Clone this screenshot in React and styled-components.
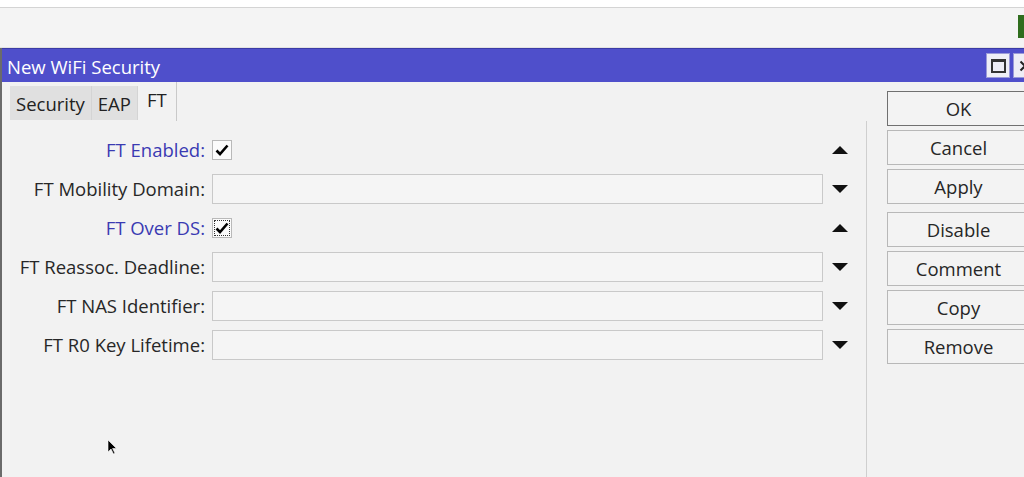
import styled, { createGlobalStyle } from 'styled-components';

const GlobalStyle = createGlobalStyle`
    html, body {
        margin: 0;
        padding: 0;
        background: #f3f3f3;
        overflow: hidden;
    }
    body {
        font-family: "Open Sans", "Noto Sans", sans-serif;
        font-size: 18.5px;
        color: #262626;
    }
`;

const Page = styled.div`
    width: 1024px;
    height: 477px;
    display: flex;
    flex-direction: column;
    position: relative;
    overflow: hidden;
`;

const TopStrip = styled.div`
    height: 40px;
    flex-shrink: 0;
    border-top: 7px solid #ffffff;
    border-bottom: 1px solid #e2e2e2;
    background: #f4f4f4;
    display: flex;
    justify-content: flex-end;
    align-items: flex-start;
    box-shadow: inset 0 1px 0 #d4d4d4;
`;

const StatusLed = styled.div`
    width: 6px;
    height: 23px;
    margin-top: 8px;
    background: #2f6d1d;
`;

const Dialog = styled.section`
    flex: 1;
    display: flex;
    flex-direction: column;
    border-left: 2px solid #6b6b6b;
    background: #f2f2f2;
    margin-right: -16px;
`;

const TitleBar = styled.header`
    height: 34px;
    flex-shrink: 0;
    background: #4f4fcb;
    border-top: 1px solid #3b3ba6;
    display: flex;
    align-items: center;
    padding-left: 5px;
    box-sizing: border-box;
    color: #ffffff;
    font-size: 18.5px;
`;

const Title = styled.span`
    flex: 1;
    padding-top: 1px;
`;

const WinButton = styled.div`
    width: 24px;
    height: 25px;
    box-sizing: border-box;
    background: #eeeef6;
    border: 1px solid #9a9ad8;
    display: flex;
    align-items: center;
    justify-content: center;
    margin-right: 3px;
    flex-shrink: 0;
`;

const MaxIcon = styled.div`
    width: 15px;
    height: 14px;
    box-sizing: border-box;
    border: 2px solid #333;
    border-top-width: 3px;
`;

const Body = styled.div`
    flex: 1;
    display: flex;
`;

const MainPane = styled.div`
    width: 865px;
    flex-shrink: 0;
    display: flex;
    flex-direction: column;
`;

const Tabs = styled.div`
    display: flex;
    padding-left: 8px;
    height: 39px;
    box-sizing: border-box;
`;

const Tab = styled.div`
    margin-top: ${p => (p.$active ? '0' : '4px')};
    height: ${p => (p.$active ? '39px' : '34px')};
    padding: 0 ${p => (p.$active ? '9px' : '6px')};
    padding-top: ${p => (p.$active ? '5px' : '0')};
    box-sizing: border-box;
    display: flex;
    align-items: ${p => (p.$active ? 'flex-start' : 'center')};
    background: ${p => (p.$active ? '#f2f2f2' : '#e0e0e0')};
    border-right: 1px solid ${p => (p.$active ? '#c9c9c9' : '#d4d4d4')};
    font-size: 18.5px;
    color: #222;
`;

const Form = styled.div`
    flex: 1;
    border-right: 1px solid #cfcfcf;
    display: grid;
    grid-template-columns: 203px 611px 20px;
    column-gap: 7px;
    grid-auto-rows: 39px;
    align-content: start;
    padding-top: 9px;
`;

const Label = styled.label`
    justify-self: end;
    align-self: center;
    color: ${p => (p.$blue ? '#3a3ab2' : '#272727')};
    white-space: nowrap;
    font-size: 18.5px;
`;

const Cell = styled.div`
    display: flex;
    align-items: center;
`;

const CheckBox = styled.div`
    width: 20px;
    height: 20px;
    box-sizing: border-box;
    border: 1px solid #b9b9b9;
    background: #fbfbfb;
    display: flex;
    align-items: center;
    justify-content: center;
    outline: ${p => (p.$focus ? '1px dotted #333' : 'none')};
    outline-offset: -3px;
`;

const Input = styled.div`
    width: 611px;
    height: 30px;
    box-sizing: border-box;
    border: 1px solid #c9c9c9;
    background: #f5f5f5;
`;

const Arrow = styled.div`
    align-self: center;
    justify-self: center;
    width: 0;
    height: 0;
    border-left: 8px solid transparent;
    border-right: 8px solid transparent;
    ${p => (p.$up ? 'border-bottom: 8px solid #111;' : 'border-top: 8px solid #111;')}
`;

const ButtonColumn = styled.div`
    display: flex;
    flex-direction: column;
    gap: 4px;
    padding: 9px 0 0 20px;
`;

const Button = styled.div`
    width: 143px;
    height: 35px;
    box-sizing: border-box;
    border: 1px solid ${p => (p.$default ? '#707070' : '#b8b8b8')};
    background: #f3f3f3;
    display: flex;
    align-items: center;
    justify-content: center;
    font-size: 18.5px;
    color: #262626;
    margin-top: ${p => (p.$spaced ? '4px' : '0')};
`;

const Cursor = styled.svg`
    position: absolute;
    left: 107px;
    top: 439px;
`;

const Check = () => (
    <svg width="14" height="12" viewBox="0 0 14 12">
        <path d="M1.5 6.5 L5 10 L12.5 1.5" fill="none" stroke="#000" strokeWidth="2.6" strokeLinejoin="miter" />
    </svg>
);

const CloseIcon = () => (
    <svg width="12" height="12" viewBox="0 0 12 12">
        <path d="M1.5 1.5 L10.5 10.5 M10.5 1.5 L1.5 10.5" stroke="#222" strokeWidth="2" />
    </svg>
);

const rows = [
    { label: 'FT Enabled:', blue: true, kind: 'check' },
    { label: 'FT Mobility Domain:', kind: 'input' },
    { label: 'FT Over DS:', blue: true, kind: 'check', focus: true },
    { label: 'FT Reassoc. Deadline:', kind: 'input' },
    { label: 'FT NAS Identifier:', kind: 'input' },
    { label: 'FT R0 Key Lifetime:', kind: 'input' },
];

const buttons = [
    { text: 'OK', def: true },
    { text: 'Cancel' },
    { text: 'Apply' },
    { text: 'Disable', spaced: true },
    { text: 'Comment' },
    { text: 'Copy' },
    { text: 'Remove' },
];

export default function App() {
    return (
        <Page>
            <GlobalStyle />
            <TopStrip>
                <StatusLed />
            </TopStrip>
            <Dialog>
                <TitleBar>
                    <Title>New WiFi Security</Title>
                    <WinButton><MaxIcon /></WinButton>
                    <WinButton><CloseIcon /></WinButton>
                </TitleBar>
                <Body>
                    <MainPane>
                        <Tabs>
                            <Tab>Security</Tab>
                            <Tab>EAP</Tab>
                            <Tab $active>FT</Tab>
                        </Tabs>
                        <Form>
                            {rows.map(r => [
                                <Label key={r.label + 'l'} $blue={r.blue}>{r.label}</Label>,
                                <Cell key={r.label + 'c'}>
                                    {r.kind === 'check'
                                        ? <CheckBox $focus={r.focus}><Check /></CheckBox>
                                        : <Input />}
                                </Cell>,
                                <Arrow key={r.label + 'a'} $up={r.kind === 'check'} />,
                            ])}
                        </Form>
                    </MainPane>
                    <ButtonColumn>
                        {buttons.map(b => (
                            <Button key={b.text} $default={b.def} $spaced={b.spaced}>{b.text}</Button>
                        ))}
                    </ButtonColumn>
                </Body>
            </Dialog>
            <Cursor width="10" height="16" viewBox="0 0 10 16">
                <path d="M1 1 L1 13 L4 10 L6.5 15 L8 14.3 L5.6 9.5 L9.5 9.5 Z" fill="#000" stroke="#fff" strokeWidth="0.6" />
            </Cursor>
        </Page>
    );
}
